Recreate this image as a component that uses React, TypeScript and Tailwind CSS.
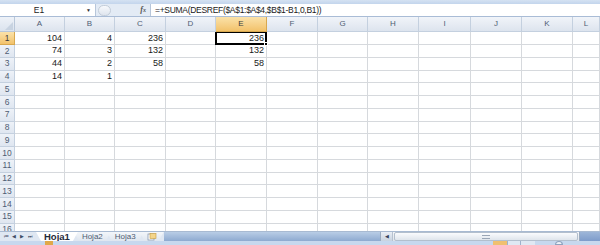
import React from "react";

const cols = ["A", "B", "C", "D", "E", "F", "G", "H", "I", "J", "K", "L"];

const data: Record<number, (string | null)[]> = {
  1: ["104", "4", "236", null, "236"],
  2: ["74", "3", "132", null, "132"],
  3: ["44", "2", "58", null, "58"],
  4: ["14", "1"],
};

const gridCols =
  "grid grid-cols-[15px_50px_50px_51px_50px_51px_51px_50px_51px_52px_51px_51px_1fr]";

const FormulaBar = () => (
  <div className="flex h-[13px] bg-[#e3ebf5] border-b border-[#a9bcd6]">
    <div className="flex w-[96px] items-center bg-white border-r border-[#b7c6da]">
      <span className="w-[78px] text-center text-[8.5px] text-[#222]">E1</span>
      <span className="text-[5px] text-[#333] ml-[8px]">▼</span>
    </div>
    <div className="relative flex-1 max-w-[54px] flex items-center">
      <div className="ml-[2px] w-[13px] h-[11px] rounded-full border border-[#c3cdd9] bg-gradient-to-b from-[#f7f9fc] to-[#dfe5ee]" />
      <span className="ml-auto mr-[4px] text-[8px] italic font-bold text-[#555] [font-family:'Liberation_Serif',serif]">
        f<span className="text-[6px]">x</span>
      </span>
    </div>
    <div className="flex-1 bg-white border-l border-[#b7c6da] flex items-center pl-[4px] text-[8.5px] text-[#1a1a1a] tracking-[-0.3px]">
      =+SUMA(DESREF($A$1:$A$4,$B$1-B1,0,B1))
    </div>
  </div>
);

const HeaderRow = () => (
  <div className={`${gridCols} h-[15px]`}>
    <div className="bg-gradient-to-b from-[#eef2f8] to-[#dbe3ee] border-r border-b border-[#b9c7d9] flex items-end justify-end">
      <div className="w-0 h-0 border-l-[8px] border-l-transparent border-b-[8px] border-b-[#c8d3e1] mr-[1px] mb-[1px]" />
    </div>
    {cols.map((c) => (
      <div
        key={c}
        className={
          c === "E"
            ? "bg-gradient-to-b from-[#fbe2a9] to-[#f2c26a] border-r border-b border-[#d8a84f] flex items-center justify-center text-[8px] text-[#3c3c3c]"
            : "bg-gradient-to-b from-[#f1f4f9] to-[#dde4ee] border-r border-b border-[#c4d0df] flex items-center justify-center text-[8px] text-[#4f5d73]"
        }
      >
        {c}
      </div>
    ))}
  </div>
);

const Row = ({ n }: { n: number }) => {
  const cells = data[n] || [];
  return (
    <div className={`${gridCols} ${n % 2 === 1 ? "h-[13px]" : "h-[12.5px]"}`}>
      <div
        className={
          n === 1
            ? "bg-gradient-to-b from-[#fbe2a9] to-[#f2c26a] border-r border-b border-[#d8a84f] text-[8.5px] text-[#3c3c3c] flex items-center justify-center"
            : "bg-gradient-to-b from-[#eef2f8] to-[#dfe6f0] border-r border-b border-[#c4d0df] text-[8.5px] text-[#4f5d73] flex items-center justify-center"
        }
      >
        {n}
      </div>
      {cols.map((c, i) => {
        const v = cells[i];
        const selected = n === 1 && c === "E";
        return (
          <div
            key={c}
            className={
              selected
                ? "relative bg-white border-2 border-black -ml-[1px] -mt-[1px] flex items-center justify-end pr-[1px] text-[9px] text-[#1a1a1a]"
                : "border-r border-b border-[#d6d9dd] flex items-center justify-end pr-[2px] text-[9px] text-[#1a1a1a]"
            }
          >
            {v}
            {selected && (
              <div className="absolute -right-[3px] -bottom-[3px] w-[4px] h-[4px] bg-black border border-white" />
            )}
          </div>
        );
      })}
    </div>
  );
};

const Tab = ({ label, active }: { label: string; active?: boolean }) => (
  <div
    className={
      active
        ? "relative -ml-[4px] h-full px-[8px] bg-white flex items-center text-[9.5px] font-bold text-[#1f2a3a] [clip-path:polygon(0_0,100%_0,calc(100%-5px)_100%,5px_100%)] z-10"
        : "relative -ml-[4px] h-full px-[8px] bg-gradient-to-b from-[#f3f6fa] to-[#dfe6ef] flex items-center text-[8px] text-[#4f5d73] [clip-path:polygon(0_0,100%_0,calc(100%-5px)_100%,5px_100%)]"
    }
  >
    {label}
  </div>
);

const Nav = ({ d }: { d: string }) => (
  <span className="w-[8px] flex items-center justify-center text-[5px] text-[#3f4f66]">{d}</span>
);

const TabBar = () => (
  <div className="flex h-[10px] bg-[#dfe7f2] border-t border-[#a8bad2]">
    <div className="flex w-[40px] pl-[2px]">
      <Nav d="⏮" />
      <Nav d="◀" />
      <Nav d="▶" />
      <Nav d="⏭" />
    </div>
    <div className="flex h-full">
      <Tab label="Hoja1" active />
      <Tab label="Hoja2" />
      <Tab label="Hoja3" />
      <div className="relative -ml-[4px] h-full w-[24px] bg-gradient-to-b from-[#f3f6fa] to-[#dfe6ef] flex items-center justify-center [clip-path:polygon(0_0,100%_0,calc(100%-5px)_100%,5px_100%)]">
        <svg width="10" height="8" viewBox="0 0 10 8">
          <rect x="1" y="1" width="6" height="6" fill="#fff" stroke="#8a9bb2" strokeWidth="0.8" />
          <rect x="3" y="0.5" width="6" height="5" fill="#f4d58a" stroke="#c59a3c" strokeWidth="0.6" />
        </svg>
      </div>
    </div>
    <div className="flex-1 bg-gradient-to-b from-[#b9cde6] to-[#8eaad0]" />
    <div className="w-[200px] flex bg-gradient-to-b from-[#f4f6f9] to-[#dfe4ea] border-x border-[#9aaabf]">
      <div className="w-[12px] flex items-center justify-center border-r border-[#b7c2d0] text-[5px] text-[#33415a] bg-gradient-to-b from-[#e9eef5] to-[#c9d3e0]">
        ◀
      </div>
      <div className="flex-1 mx-[1px] bg-gradient-to-b from-[#fafbfd] to-[#dfe5ec] border border-[#b3bfcd] rounded-[2px] flex items-center justify-center">
        <div className="w-[8px] h-[4px] border-y border-[#9aa6b6]" />
      </div>
    </div>
    <div className="w-[20px] bg-gradient-to-b from-[#9db6d8] to-[#7e9ccb]" />
  </div>
);

const StatusBar = () => (
  <div className="h-[4px] bg-[#c7d8ee] flex">
    <div className="ml-[45px] w-[8px] h-[4px] bg-[#e0a84a]" />
    <div className="ml-[440px] w-[14px] h-[4px] bg-[#f0c070]" />
    <div className="w-[14px] h-[4px] bg-[#dfe8f3] border-x border-[#9fb2cc]" />
    <div className="w-[14px] h-[4px] bg-[#dfe8f3]" />
    <div className="ml-[20px] w-[8px] h-[4px] rounded-t-full bg-[#eef3f9] border border-[#8fa3bf]" />
  </div>
);

export default function App() {
  const rows = Array.from({ length: 16 }, (_, i) => i + 1);
  return (
    <div className="w-[600px] h-[245px] overflow-hidden flex flex-col bg-white [font-family:'Liberation_Sans',Arial,sans-serif] leading-none">
      <div className="h-[4px] bg-gradient-to-b from-[#d5e2f2] to-[#c3d5ec]" />
      <FormulaBar />
      <HeaderRow />
      <div className="flex-1 overflow-hidden">
        {rows.map((n) => (
          <Row key={n} n={n} />
        ))}
      </div>
      <TabBar />
      <StatusBar />
    </div>
  );
}
